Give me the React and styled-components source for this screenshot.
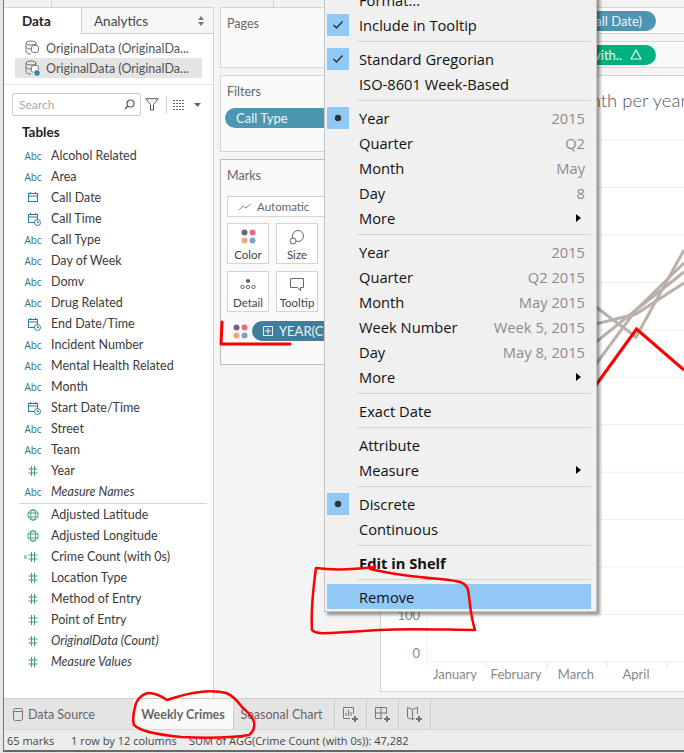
import React from "react";
import styled, { createGlobalStyle } from "styled-components";

const GlobalStyle = createGlobalStyle`
  html, body { margin: 0; padding: 0; background: #efefef; }
  * { box-sizing: border-box; }
`;

const BOOK = `Lato, "Open Sans", sans-serif`;
const UI = `"Open Sans", "Noto Sans", sans-serif`;

const Screen = styled.div`
  position: relative;
  width: 684px;
  height: 753px;
  overflow: hidden;
  padding: 0 0 1px 3px;
  background: #e6e6e6;
  font-family: ${BOOK};
`;

const Frame = styled.div`
  height: 100%;
  display: flex;
  flex-direction: column;
  background: #f4f4f4;
  border-left: 1px solid #777;
  border-bottom: 2px solid #666;
`;

const TopStrip = styled.div`
  height: 7px;
  flex: none;
  display: flex;
  padding-left: 47px;
  gap: 221px;
  background: #f2f2f2;
`;

const StripMark = styled.span`
  width: 1px;
  background: #cfcfcf;
`;

const Main = styled.div`
  flex: 1;
  min-height: 0;
  display: flex;
`;

/* data pane */
const DataPane = styled.aside`
  width: 210px;
  flex: none;
  background: #fff;
  border-top: 1px solid #d4d4d4;
  border-right: 1px solid #d4d4d4;
  display: flex;
  flex-direction: column;
`;

const PaneTabs = styled.div`
  height: 26px;
  flex: none;
  display: flex;
`;

const PaneTab = styled.div`
  width: ${(p) => (p.$active ? "77px" : "auto")};
  flex: ${(p) => (p.$active ? "none" : "1")};
  display: flex;
  align-items: center;
  justify-content: space-between;
  padding: 0 9px 0 ${(p) => (p.$active ? "18px" : "12px")};
  font-size: 13.5px;
  font-weight: ${(p) => (p.$active ? 700 : 400)};
  color: ${(p) => (p.$active ? "#222" : "#444")};
  background: ${(p) => (p.$active ? "#fff" : "#f6f6f6")};
  border-left: ${(p) => (p.$active ? "none" : "1px solid #ccc")};
  border-bottom: ${(p) => (p.$active ? "none" : "1px solid #ccc")};
`;

const SourceList = styled.div`
  padding: 4px 11px 6px 11px;
  border-bottom: 1px solid #e2e2e2;
`;

const SourceRow = styled.div`
  height: 20px;
  display: flex;
  align-items: center;
  gap: 4px;
  padding-left: 9px;
  font-size: 12.5px;
  color: #555;
  white-space: nowrap;
  background: ${(p) => (p.$selected ? "#e4e4e4" : "transparent")};
`;

const SearchRow = styled.div`
  display: flex;
  align-items: center;
  margin: 8px 0 0 8px;
  height: 23px;
`;

const SearchBox = styled.div`
  width: 129px;
  height: 23px;
  display: flex;
  align-items: center;
  justify-content: space-between;
  padding: 0 5px 0 6px;
  border: 1px solid #ccc;
  border-radius: 2px;
  font-size: 12px;
  color: #aaa;
`;

const SearchTool = styled.div`
  display: flex;
  align-items: center;
  margin-left: ${(p) => p.$gap || 0}px;
  padding-right: ${(p) => p.$pad || 0}px;
  height: 18px;
  border-right: ${(p) => (p.$line ? "1px solid #ccc" : "none")};
`;

const TablesHead = styled.div`
  margin: 7px 0 0 18px;
  height: 18px;
  line-height: 18px;
  font-size: 13.5px;
  font-weight: 700;
  color: #222;
`;

const FieldList = styled.div`
  margin-top: 4px;
`;

const FieldRow = styled.div`
  height: 21px;
  display: flex;
  align-items: center;
  padding-left: 19px;
  font-size: 12.5px;
  font-style: ${(p) => (p.$italic ? "italic" : "normal")};
  color: #3b3b3b;
  white-space: nowrap;
`;

const FieldIcon = styled.span`
  width: 20px;
  margin-right: 8px;
  flex: none;
  display: flex;
  align-items: center;
  justify-content: center;
  font-family: ${UI};
  font-style: normal;
  font-size: 10px;
  letter-spacing: -0.1px;
  color: #2a7390;
`;

const FieldRule = styled.div`
  height: 1px;
  margin: 1px 6px 0 15px;
  background: #d8d8d8;
`;

/* middle cards */
const CardColumn = styled.div`
  width: 166px;
  flex: none;
  display: flex;
  flex-direction: column;
  gap: 7px;
  padding: 0 6px;
`;

const Card = styled.section`
  height: ${(p) => p.$height}px;
  flex: none;
  overflow: hidden;
  background: #fafafa;
  border: 1px solid ${(p) => (p.$strong ? "#bcbcbc" : "#d4d4d4")};
  padding: 8px 0 0 6px;
`;

const CardTitle = styled.div`
  height: 16px;
  line-height: 16px;
  font-size: 12.5px;
  color: #666;
`;

const Pill = styled.div`
  height: 20px;
  flex: none;
  display: flex;
  align-items: center;
  gap: ${(p) => p.$gap || 0}px;
  padding: 0 ${(p) => p.$right || 10}px 0 ${(p) => p.$left || 11}px;
  border-radius: 10px;
  background: ${(p) => p.$color};
  color: #edf5f8;
  font-size: 13px;
  white-space: nowrap;
  svg {
    flex: none;
  }
`;

const FilterPill = styled(Pill)`
  margin: 8px 0 0 -2px;
  width: 150px;
`;

const MarkSelect = styled.div`
  width: 126px;
  height: 21px;
  margin-top: 12px;
  display: flex;
  align-items: center;
  gap: 5px;
  padding-left: 10px;
  background: #fff;
  border: 1px solid #d4d4d4;
  font-size: 11.5px;
  color: #666;
`;

const MarkGrid = styled.div`
  display: grid;
  grid-template-columns: 42px 42px;
  grid-auto-rows: 41px;
  gap: 7px;
  margin-top: 6px;
`;

const MarkButton = styled.div`
  display: flex;
  flex-direction: column;
  align-items: center;
  justify-content: space-between;
  padding: 5px 0 2px;
  background: #fff;
  border: 1px solid #d4d4d4;
  font-size: 11.5px;
  color: #444;
`;

const EncodingRow = styled.div`
  display: flex;
  align-items: center;
  gap: 4px;
  margin: 9px 0 0 6px;
`;

const DotsBox = styled.svg`
  flex: none;
`;

/* right side */
const RightColumn = styled.div`
  flex: 1;
  min-width: 0;
  display: flex;
  flex-direction: column;
  gap: 7px;
`;

const ShelfRow = styled.div`
  height: 27px;
  flex: none;
  display: flex;
  justify-content: flex-end;
  align-items: center;
  padding-right: 28px;
  background: #fafafa;
  border-top: 1px solid #d8d8d8;
  border-bottom: 1px solid #d8d8d8;
`;

const ViewPanel = styled.div`
  position: relative;
  flex: 1;
  min-height: 0;
  display: flex;
  flex-direction: column;
  overflow: hidden;
  margin-bottom: 6px;
  background: #fff;
  border: 1px solid #d4d4d4;
  border-right: none;
`;

const ViewTitle = styled.div`
  position: absolute;
  top: 13px;
  right: -3px;
  font-size: 18.5px;
  font-weight: 300;
  color: #555;
  white-space: nowrap;
`;

const Chart = styled.svg`
  display: block;
  width: 303px;
  height: 100%;
`;

/* tabs and status */
const TabBar = styled.div`
  height: 31px;
  flex: none;
  display: flex;
  background: #e4e4e4;
  border-top: 1px solid #cdcdcd;
`;

const SourceTab = styled.div`
  width: 129px;
  display: flex;
  align-items: center;
  gap: 5px;
  padding-left: 9px;
  font-size: 12.5px;
  color: #666;
`;

const SheetTab = styled.div`
  width: ${(p) => p.$width}px;
  display: flex;
  align-items: center;
  justify-content: center;
  padding-right: ${(p) => (p.$active ? 0 : 5)}px;
  font-size: 12.5px;
  font-weight: ${(p) => (p.$active ? 700 : 400)};
  color: #666;
  background: ${(p) => (p.$active ? "#fafafa" : "transparent")};
  border-right: 1px solid #cdcdcd;
`;

const AddTab = styled.div`
  width: 32px;
  display: flex;
  align-items: center;
  justify-content: center;
  border-right: 1px solid #cdcdcd;
`;

const StatusBar = styled.div`
  height: 21px;
  flex: none;
  display: flex;
  align-items: center;
  padding-left: 3px;
  background: #ececec;
  border-top: 1px solid #d8d8d8;
  font-family: ${UI};
  font-size: 11px;
  color: #444;
  white-space: nowrap;
`;

const StatusItem = styled.span`
  width: ${(p) => p.$width}px;
  flex: none;
`;

/* context menu */
const Menu = styled.div`
  position: absolute;
  left: 324px;
  top: -16px;
  width: 273px;
  padding: 2px 5px 2px 2px;
  background: #f0f0f0;
  border: 1px solid #c4c4c4;
  box-shadow: 3px 3px 3px rgba(0, 0, 0, 0.4);
  font-family: ${UI};
  font-size: 14.7px;
  color: #111;
`;

const MenuRow = styled.div`
  height: 25px;
  display: flex;
  align-items: center;
  white-space: nowrap;
  background: ${(p) => (p.$hot ? "#90c8f6" : "transparent")};
  font-weight: ${(p) => (p.$bold ? 700 : 400)};
`;

const MenuMark = styled.span`
  width: 22px;
  height: 22px;
  flex: none;
  display: flex;
  align-items: center;
  justify-content: center;
  background: ${(p) => (p.$on ? "#90c8f6" : "transparent")};
`;

const MenuLabel = styled.span`
  flex: 1;
  margin-left: 10px;
`;

const MenuValue = styled.span`
  margin-right: 6px;
  color: #8c8c8c;
`;

const MenuArrow = styled.span`
  margin-right: 10px;
  width: 0;
  height: 0;
  border-left: 5px solid #000;
  border-top: 4px solid transparent;
  border-bottom: 4px solid transparent;
`;

const MenuRule = styled.div`
  height: 1px;
  margin: 4px 0 4px 30px;
  background: #d2d2d2;
`;

const Scribbles = styled.svg`
  position: absolute;
  left: 0;
  top: 0;
  pointer-events: none;
`;

const Hash = ({ eq }) => (
  <svg width="20" height="12" viewBox="0 0 20 12" fill="none" stroke="#3a9f7c" strokeWidth="1">
    <path d="M8.5 1v10M11.5 1v10M5.5 4h9M5.5 8h9" />
    {eq && <path d="M1 5h3M1 7h3" />}
  </svg>
);

const Calendar = ({ clock }) => (
  <svg width="20" height="14" viewBox="0 0 20 14" fill="none" stroke="#2f7c98" strokeWidth="1">
    <rect x="5.5" y="2.5" width="9" height="8" />
    <path d="M5.5 5h9M7.5 1v2M12.5 1v2" />
    {clock && <circle cx="14.5" cy="10.5" r="3" fill="#fff" />}
    {clock && <path d="M14.5 9v1.5h1.5" />}
  </svg>
);

const Globe = () => (
  <svg width="20" height="12" viewBox="0 0 20 12" fill="none" stroke="#3a9f7c" strokeWidth="0.9">
    <circle cx="10" cy="6" r="5.2" />
    <ellipse cx="10" cy="6" rx="2.4" ry="5.2" />
    <path d="M5 4h10M5 8h10" />
  </svg>
);

const fields = [
  ["abc", "Alcohol Related"],
  ["abc", "Area"],
  ["date", "Call Date"],
  ["time", "Call Time"],
  ["abc", "Call Type"],
  ["abc", "Day of Week"],
  ["abc", "Domv"],
  ["abc", "Drug Related"],
  ["time", "End Date/Time"],
  ["abc", "Incident Number"],
  ["abc", "Mental Health Related"],
  ["abc", "Month"],
  ["time", "Start Date/Time"],
  ["abc", "Street"],
  ["abc", "Team"],
  ["hash", "Year"],
  ["abc", "Measure Names", true],
];

const measures = [
  ["globe", "Adjusted Latitude"],
  ["globe", "Adjusted Longitude"],
  ["eq", "Crime Count (with 0s)"],
  ["hash", "Location Type"],
  ["hash", "Method of Entry"],
  ["hash", "Point of Entry"],
  ["hash", "OriginalData (Count)", true],
  ["hash", "Measure Values", true],
];

const FieldGlyph = ({ kind }) => {
  if (kind === "abc") return "Abc";
  if (kind === "date") return <Calendar />;
  if (kind === "time") return <Calendar clock />;
  if (kind === "globe") return <Globe />;
  return <Hash eq={kind === "eq"} />;
};

const Field = ({ kind, name, italic }) => (
  <FieldRow $italic={italic}>
    <FieldIcon>
      <FieldGlyph kind={kind} />
    </FieldIcon>
    {name}
  </FieldRow>
);

const SourceIcon = ({ check }) => (
  <svg width="18" height="18" viewBox="0 0 18 18" fill="none" stroke="#777" strokeWidth="1">
    <ellipse cx="7" cy="4" rx="5" ry="2" />
    <path d="M2 4v9c0 1 2 2 5 2M12 4v3" />
    <path d="M2 8c0 1 2 2 5 2" />
    <rect x="7.5" y="6.5" width="7" height="7" rx="2" fill="#fff" />
    {check && <circle cx="13" cy="14" r="3.5" fill="#3b88ad" stroke="#fff" />}
  </svg>
);

const Dots = () => (
  <DotsBox width="15" height="15" viewBox="0 0 15 15">
    <circle cx="3.5" cy="3.5" r="3" fill="#76608a" />
    <circle cx="11.5" cy="3.5" r="3" fill="#ef6a7d" />
    <circle cx="3.5" cy="11.5" r="3" fill="#f0a77e" />
    <circle cx="11.5" cy="11.5" r="3" fill="#7ea0cf" />
  </DotsBox>
);

const SizeIcon = () => (
  <svg width="20" height="16" viewBox="0 0 20 16" fill="none" stroke="#666">
    <circle cx="11" cy="7" r="5.5" />
    <circle cx="6" cy="12" r="3" fill="#fff" />
  </svg>
);

const DetailIcon = () => (
  <svg width="16" height="14" viewBox="0 0 16 14" fill="none" stroke="#666">
    <circle cx="8" cy="4" r="1.6" fill="#666" />
    <circle cx="2.5" cy="10" r="1.7" />
    <circle cx="8" cy="10" r="1.7" />
    <circle cx="13.5" cy="10" r="1.7" />
  </svg>
);

const TooltipIcon = () => (
  <svg width="16" height="15" viewBox="0 0 16 15" fill="none" stroke="#666">
    <path d="M1.5 1.5h13v9h-3v3l-3-3h-7z" />
  </svg>
);

const menu = [
  [{ label: "Format..." }, { label: "Include in Tooltip", mark: "check" }],
  [{ label: "Standard Gregorian", mark: "check" }, { label: "ISO-8601 Week-Based" }],
  [
    { label: "Year", value: "2015", mark: "dot" },
    { label: "Quarter", value: "Q2" },
    { label: "Month", value: "May" },
    { label: "Day", value: "8" },
    { label: "More", arrow: true },
  ],
  [
    { label: "Year", value: "2015" },
    { label: "Quarter", value: "Q2 2015" },
    { label: "Month", value: "May 2015" },
    { label: "Week Number", value: "Week 5, 2015" },
    { label: "Day", value: "May 8, 2015" },
    { label: "More", arrow: true },
  ],
  [{ label: "Exact Date" }],
  [{ label: "Attribute" }, { label: "Measure", arrow: true }],
  [{ label: "Discrete", mark: "dot" }, { label: "Continuous" }],
  [{ label: "Edit in Shelf", bold: true }],
  [{ label: "Remove", hot: true }],
];

const MarkGlyph = ({ mark }) =>
  mark === "dot" ? (
    <svg width="8" height="8" viewBox="0 0 8 8">
      <circle cx="4" cy="4" r="3.2" fill="#333" />
    </svg>
  ) : (
    <svg width="12" height="10" viewBox="0 0 12 10" fill="none" stroke="#333" strokeWidth="1.5">
      <path d="M1.5 5l3 3 6-6.5" />
    </svg>
  );

const ContextMenu = () => (
  <Menu>
    {menu.map((group, g) => (
      <React.Fragment key={g}>
        {g > 0 && <MenuRule />}
        {group.map((item) => (
          <MenuRow key={item.label + (item.value || "")} $hot={item.hot} $bold={item.bold}>
            <MenuMark $on={!!item.mark}>{item.mark && <MarkGlyph mark={item.mark} />}</MenuMark>
            <MenuLabel>{item.label}</MenuLabel>
            {item.value && <MenuValue>{item.value}</MenuValue>}
            {item.arrow && <MenuArrow />}
          </MenuRow>
        ))}
      </React.Fragment>
    ))}
  </Menu>
);

const months = [
  ["January", 455],
  ["February", 516],
  ["March", 576],
  ["April", 636],
];

const gridY = Array.from({ length: 12 }, (_, i) => 140 + i * 47.45);

const greyLines = [
  "M596 307L636 337L684 250",
  "M596 324L636 314L684 283",
  "M596 342L636 310L684 272",
  "M596 364L636 310L684 263",
];

const ChartView = () => (
  <Chart viewBox="381 76 303 615">
    {gridY.map((y) => (
      <line key={y} x1="427" x2="684" y1={y} y2={y} stroke="#efefef" />
    ))}
    <line x1="427" x2="427" y1="76" y2="668" stroke="#efefef" />
    {months.map(([m, x]) => (
      <g key={m}>
        <line x1={x + 31} x2={x + 31} y1="662" y2="668" stroke="#e4e4e4" />
        <text x={x} y="679" textAnchor="middle" fontSize="13" fill="#888" fontFamily="Lato, sans-serif">
          {m}
        </text>
      </g>
    ))}
    <text x="420" y="620" textAnchor="end" fontSize="13" fill="#888" fontFamily="Lato, sans-serif">
      100
    </text>
    <text x="420" y="658" textAnchor="end" fontSize="13" fill="#888" fontFamily="Lato, sans-serif">
      0
    </text>
    {greyLines.map((d) => (
      <path key={d} d={d} fill="none" stroke="#bab0ac" strokeWidth="3" />
    ))}
    <path d="M596 385L636.5 329L684 370" fill="none" stroke="#f00" strokeWidth="3" />
  </Chart>
);

export default function App() {
  return (
    <Screen>
      <GlobalStyle />
      <Frame>
        <TopStrip>
          <StripMark />
          <StripMark />
        </TopStrip>
        <Main>
          <DataPane>
            <PaneTabs>
              <PaneTab $active>Data</PaneTab>
              <PaneTab>
                Analytics
                <svg width="6" height="10" viewBox="0 0 6 10" fill="#777">
                  <path d="M3 0l3 4H0zM3 10L0 6h6z" />
                </svg>
              </PaneTab>
            </PaneTabs>
            <SourceList>
              <SourceRow>
                <SourceIcon />
                OriginalData (OriginalDa...
              </SourceRow>
              <SourceRow $selected>
                <SourceIcon check />
                OriginalData (OriginalDa...
              </SourceRow>
            </SourceList>
            <SearchRow>
              <SearchBox>
                Search
                <svg width="11" height="11" viewBox="0 0 11 11" fill="none" stroke="#555" strokeWidth="1.2">
                  <circle cx="6.5" cy="4.5" r="3.5" />
                  <path d="M4 7l-3 3" />
                </svg>
              </SearchBox>
              <SearchTool $gap={4} $pad={7} $line>
                <svg width="14" height="13" viewBox="0 0 14 13" fill="none" stroke="#555">
                  <path d="M.7.7h12.6L8.5 6.5V12h-3V6.5z" />
                </svg>
              </SearchTool>
              <SearchTool $gap={6}>
                <svg width="12" height="10" viewBox="0 0 12 10" fill="none" stroke="#666" strokeDasharray="2 1">
                  <path d="M0 .5h12M0 3.5h12M0 6.5h12M0 9.5h12" />
                </svg>
              </SearchTool>
              <SearchTool $gap={9}>
                <svg width="7" height="4" viewBox="0 0 7 4" fill="#666">
                  <path d="M0 0h7L3.5 4z" />
                </svg>
              </SearchTool>
            </SearchRow>
            <TablesHead>Tables</TablesHead>
            <FieldList>
              {fields.map(([kind, name, italic]) => (
                <Field key={name} kind={kind} name={name} italic={italic} />
              ))}
              <FieldRule />
              {measures.map(([kind, name, italic]) => (
                <Field key={name} kind={kind} name={name} italic={italic} />
              ))}
            </FieldList>
          </DataPane>

          <CardColumn>
            <Card $height={61}>
              <CardTitle>Pages</CardTitle>
            </Card>
            <Card $height={77}>
              <CardTitle>Filters</CardTitle>
              <FilterPill $color="#4c96b2">Call Type</FilterPill>
            </Card>
            <Card $height={206} $strong>
              <CardTitle>Marks</CardTitle>
              <MarkSelect>
                <svg width="14" height="8" viewBox="0 0 14 8" fill="none" stroke="#888">
                  <path d="M1 7l4-4 3 2 5-4" />
                </svg>
                Automatic
              </MarkSelect>
              <MarkGrid>
                <MarkButton>
                  <Dots />
                  Color
                </MarkButton>
                <MarkButton>
                  <SizeIcon />
                  Size
                </MarkButton>
                <MarkButton>
                  <DetailIcon />
                  Detail
                </MarkButton>
                <MarkButton>
                  <TooltipIcon />
                  Tooltip
                </MarkButton>
              </MarkGrid>
              <EncodingRow>
                <Dots />
                <Pill $color="#3f7e9c" $gap={6} $left={11}>
                  <svg width="10" height="10" viewBox="0 0 10 10" fill="none" stroke="#e9f3f6">
                    <path d="M.5.5h9v9h-9zM5 2v6M2 5h6" />
                  </svg>
                  YEAR(Call Date)
                </Pill>
              </EncodingRow>
            </Card>
          </CardColumn>

          <RightColumn>
            <ShelfRow>
              <Pill $color="#4c96b2" $right={14}>
                MONTH(Call Date)
              </Pill>
            </ShelfRow>
            <ShelfRow>
              <Pill $color="#00b180" $gap={8} $right={14}>
                AGG(Crime Count (with..
                <svg width="12" height="11" viewBox="0 0 12 11" fill="none" stroke="#e9f3f6" strokeWidth="1.2">
                  <path d="M6 1l5 9H1z" />
                </svg>
              </Pill>
            </ShelfRow>
            <ViewPanel>
              <ViewTitle>Crimes by month per year</ViewTitle>
              <ChartView />
            </ViewPanel>
          </RightColumn>
        </Main>

        <TabBar>
          <SourceTab>
            <svg width="10" height="13" viewBox="0 0 10 13" fill="none" stroke="#777">
              <rect x=".5" y=".5" width="9" height="12" rx="2" />
              <path d="M.5 3.5h9" />
            </svg>
            Data Source
          </SourceTab>
          <SheetTab $active $width={101}>
            Weekly Crimes
          </SheetTab>
          <SheetTab $width={101}>Seasonal Chart</SheetTab>
          <AddTab>
            <svg width="17" height="17" viewBox="0 0 17 17" fill="none" stroke="#777">
              <path d="M11.5 8V1.5h-10v11H8M4 10V7M6.5 10V4M9 10V6" />
              <path d="M13 10v6M10 13h6" strokeWidth="2" />
            </svg>
          </AddTab>
          <AddTab>
            <svg width="17" height="17" viewBox="0 0 17 17" fill="none" stroke="#777">
              <path d="M12.5 8V1.5h-11v11H8M1.5 7h11M7 1.5v11" />
              <path d="M13 10v6M10 13h6" strokeWidth="2" />
            </svg>
          </AddTab>
          <AddTab>
            <svg width="17" height="17" viewBox="0 0 17 17" fill="none" stroke="#777">
              <path d="M1.5 1.5l5 2 5-2V8M1.5 1.5v10l5 2 2-1M6.5 3.5v10" />
              <path d="M13 10v6M10 13h6" strokeWidth="2" />
            </svg>
          </AddTab>
        </TabBar>
        <StatusBar>
          <StatusItem $width={64}>65 marks</StatusItem>
          <StatusItem $width={118}>1 row by 12 columns</StatusItem>
          <span>SUM of AGG(Crime Count (with 0s)): 47,282</span>
        </StatusBar>
      </Frame>

      <ContextMenu />

      <Scribbles width="684" height="753" viewBox="0 0 684 753" fill="none" stroke="#f00" strokeWidth="2.5" strokeLinejoin="round" strokeLinecap="round">
        <path d="M222 322L221 344L290 344" strokeWidth="3" />
        <path d="M375 567C350 570 330 570 316 568C313 590 311 615 312 630C316 636 340 632 380 630C410 628 450 630 475 630C470 615 470 600 468 590C466 582 460 581 440 579C415 577 395 575 370 569" />
        <path d="M167 700C160 695 154 693 148 693C142 694 136 700 135 707C133 715 133 722 134 725C140 731 160 735 181 737C200 738 230 738 249 735C254 731 255 727 254 722C252 715 246 711 242 707C236 699 232 695 226 693C218 691 208 691 200 692C190 693 176 697 167 700" />
      </Scribbles>
    </Screen>
  );
}
